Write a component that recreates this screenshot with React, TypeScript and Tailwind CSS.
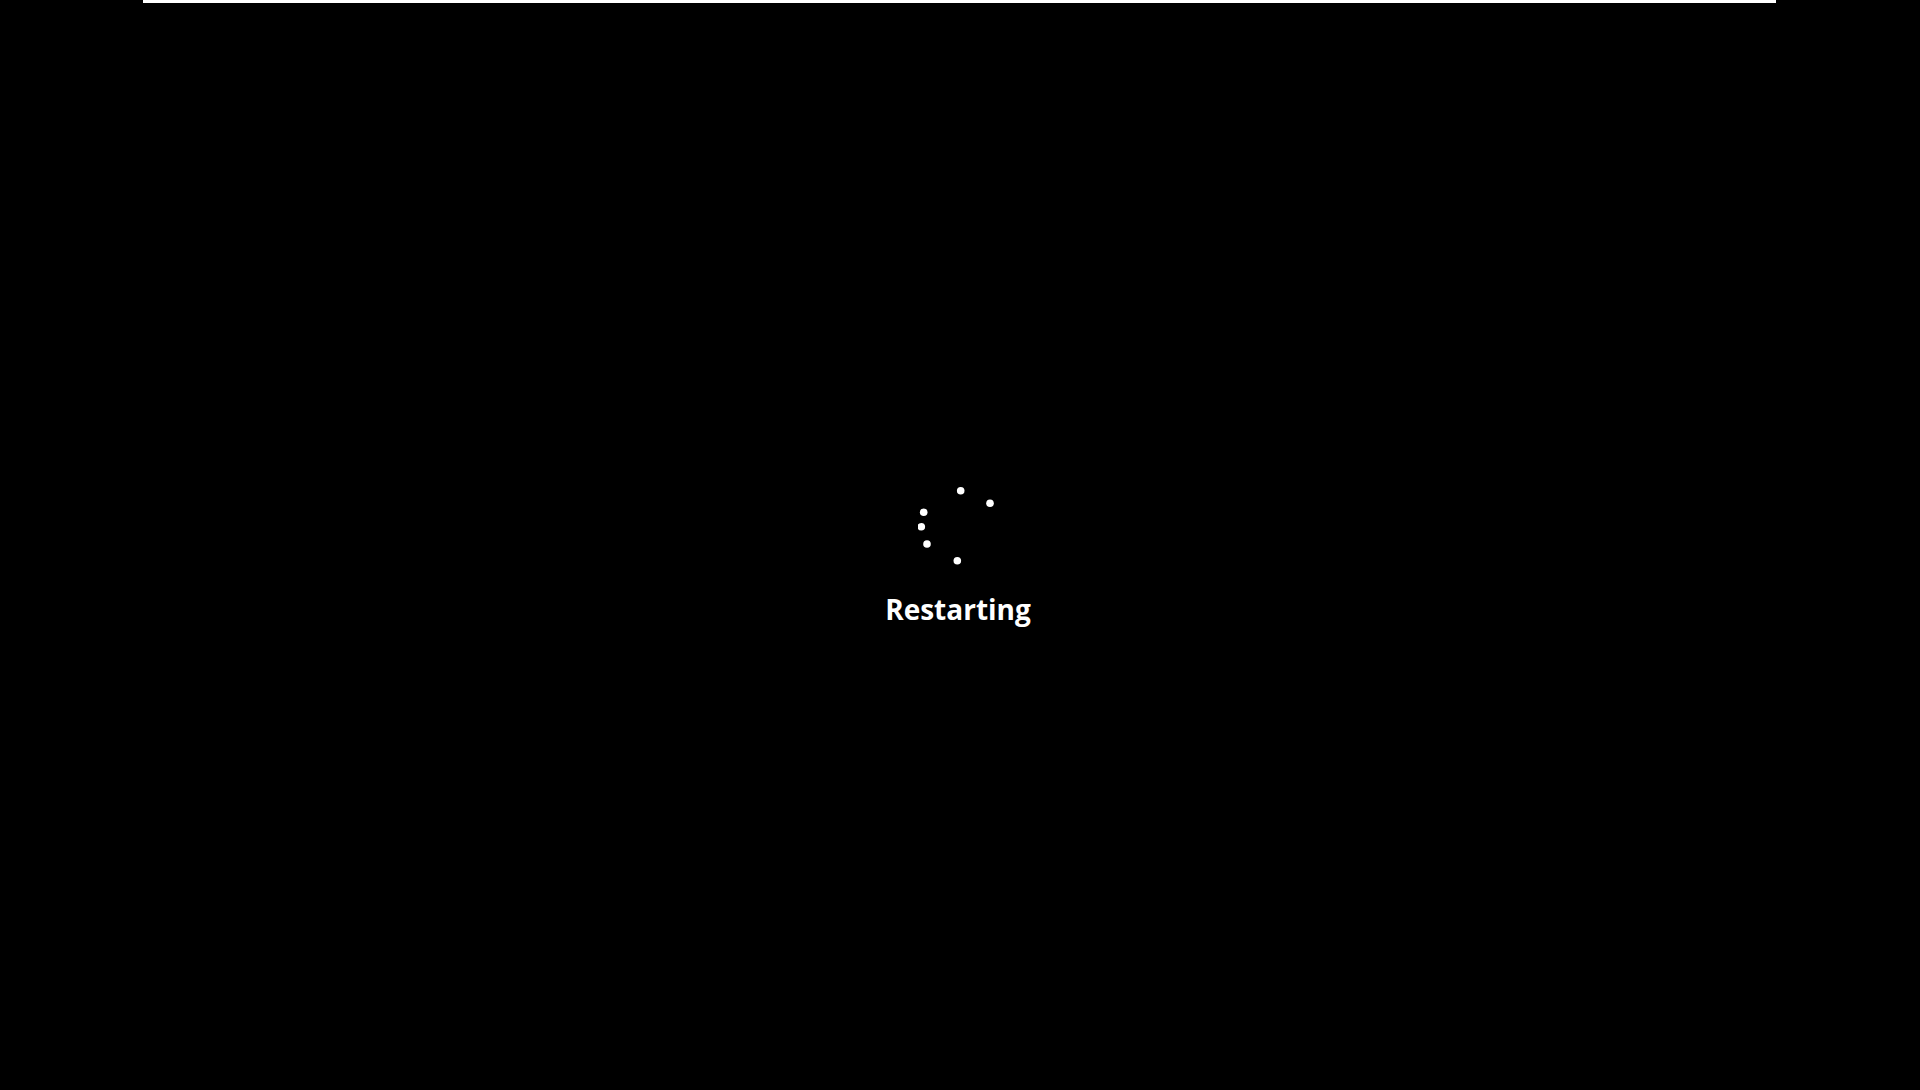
import React from "react";

export default function App() {
  const dots: [number, number][] = [
    [42.7, 4.7],
    [72, 17.3],
    [5.7, 26.3],
    [3.3, 40.7],
    [9, 58],
    [39.3, 74.7],
  ];
  return (
    <div className="w-full h-[1090px] bg-black flex flex-col overflow-hidden">
      <div className="ml-[143px] w-[1633px] h-[3px] bg-white" />
      <div className="flex flex-col items-center pt-[483px] pr-[4px]">
        <svg width="80" height="80" viewBox="0 0 80 80" className="block">
          {dots.map(([x, y], i) => (
            <circle key={i} cx={x} cy={y} r={3.8} fill="#ffffff" />
          ))}
        </svg>
        <div
          className="mt-[26px] text-white text-[28px] leading-[34px] font-bold"
          style={{ fontFamily: '"Open Sans", "Noto Sans", sans-serif' }}
        >
          Restarting
        </div>
      </div>
    </div>
  );
}
